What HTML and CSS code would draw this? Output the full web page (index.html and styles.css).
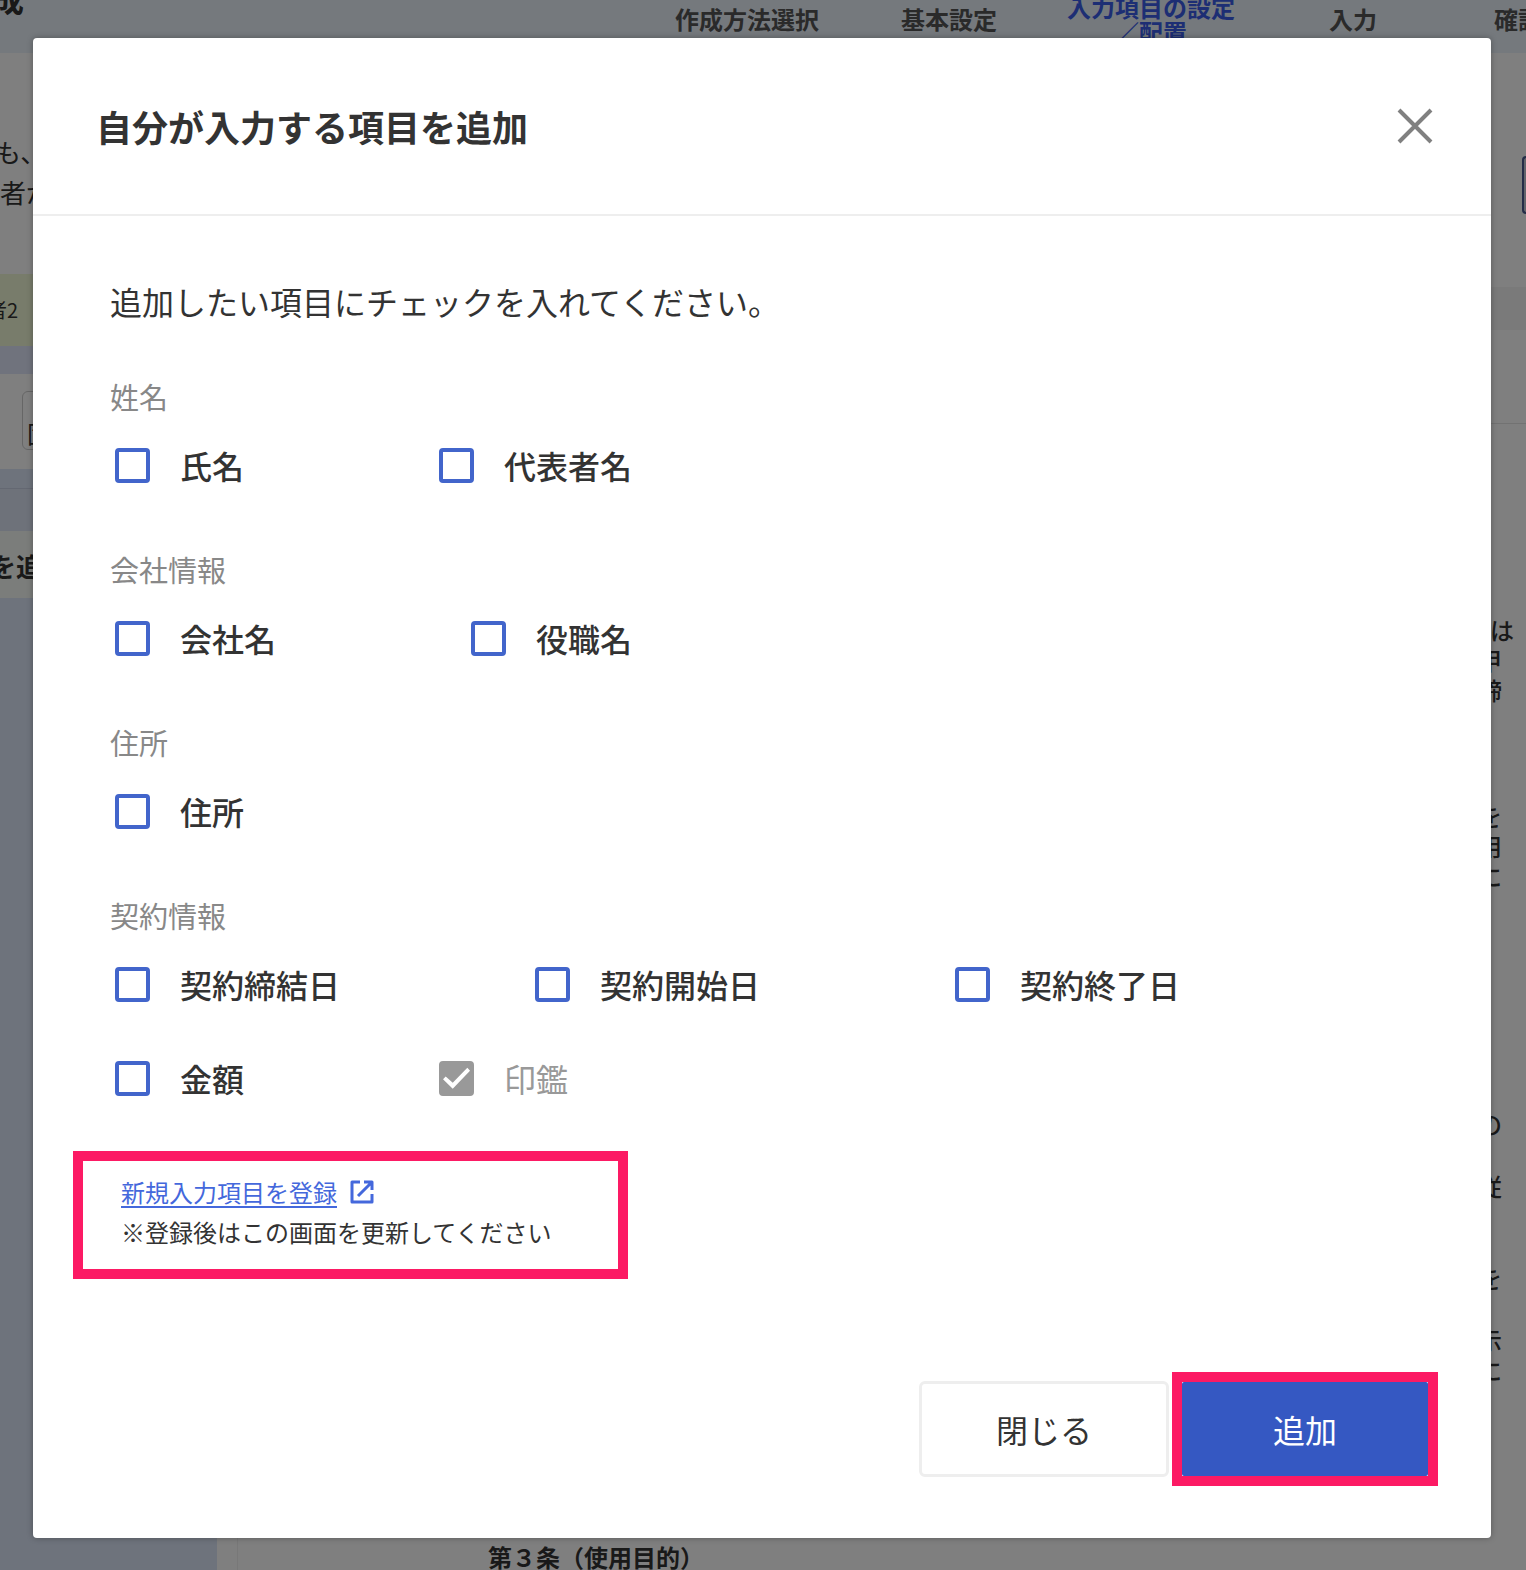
FILE: index.html
```html
<!DOCTYPE html>
<html lang="ja">
<head>
<meta charset="utf-8">
<meta name="viewport" content="width=device-width, initial-scale=1">
<title>自分が入力する項目を追加</title>
<link rel="stylesheet" href="styles.css">
</head>
<body>
<div class="stage">
  <div class="page" aria-hidden="true">
    <header class="page-header">
      <div class="page-title">成</div>
      <ol class="steps">
        <li>作成方法選択</li>
        <li>基本設定</li>
        <li class="current">入力項目の設定<br>／配置</li>
        <li>入力</li>
        <li class="last">確認</li>
      </ol>
    </header>
    <div class="page-columns">
      <aside class="sidebar">
        <div class="lead">も、<br>者が</div>
        <div class="party">者2</div>
        <div class="strip"></div>
        <div class="field-row"><div class="field">固</div></div>
        <div class="tabs"></div>
        <div class="add-row">を追</div>
      </aside>
      <section class="preview">
        <div class="preview-actions"><div class="outlined"></div></div>
        <div class="toolbar"></div>
        <div class="paper">
          <div class="paper-top"></div>
          <div class="clause"><span class="wide">は</span><span>甲</span><span>締</span></div>
          <div class="clause"><span>を</span><span>用</span><span>に</span></div>
          <div class="clause far"><span>の</span></div>
          <div class="clause near"><span>従</span></div>
          <div class="clause mid"><span>を</span></div>
          <div class="clause near"><span>示</span><span>に</span></div>
          <div class="article">第３条（使用目的）</div>
        </div>
      </section>
    </div>
    <div class="scrim"></div>
  </div>

  <main class="dialog" role="dialog" aria-labelledby="dialog-title">
    <header class="dialog-header">
      <h1 id="dialog-title">自分が入力する項目を追加</h1>
      <button class="icon-button" type="button" aria-label="ダイアログを閉じる">
        <svg viewBox="0 0 36 36" width="36" height="36" aria-hidden="true"><path d="M2 2 34 34M34 2 2 34" fill="none" stroke="#808080" stroke-width="4"/></svg>
      </button>
    </header>
    <form class="dialog-form">
      <div class="dialog-body">
        <p class="intro">追加したい項目にチェックを入れてください。</p>
        <fieldset>
          <legend>姓名</legend>
          <div class="options">
            <label><input type="checkbox">氏名</label>
            <label><input type="checkbox">代表者名</label>
          </div>
        </fieldset>
        <fieldset>
          <legend>会社情報</legend>
          <div class="options">
            <label><input type="checkbox">会社名</label>
            <label><input type="checkbox">役職名</label>
          </div>
        </fieldset>
        <fieldset>
          <legend>住所</legend>
          <div class="options">
            <label><input type="checkbox">住所</label>
          </div>
        </fieldset>
        <fieldset>
          <legend>契約情報</legend>
          <div class="options">
            <label><input type="checkbox">契約締結日</label>
            <label><input type="checkbox">契約開始日</label>
            <label><input type="checkbox">契約終了日</label>
          </div>
          <div class="options">
            <label><input type="checkbox">金額</label>
            <label class="disabled"><input type="checkbox" checked disabled>印鑑</label>
          </div>
        </fieldset>
      </div>
      <div class="register">
        <div class="register-line">
          <a href="#register">新規入力項目を登録</a>
          <svg viewBox="0 0 24 24" width="24" height="24" aria-hidden="true"><path d="M10 2H2v20h20v-8M14 2h8v8M22 2 8 16" fill="none" stroke="#4468dc" stroke-width="3" stroke-linejoin="round"/></svg>
        </div>
        <p>※登録後はこの画面を更新してください</p>
      </div>
      <footer class="dialog-footer">
        <button class="button" type="button">閉じる</button>
        <div class="marked"><button class="button primary" type="submit">追加</button></div>
      </footer>
    </form>
  </main>
</div>
</body>
</html>
```
FILE: styles.css
```css
* {
  box-sizing: border-box;
}

body {
  margin: 0;
  color: #333;
  font-family: "Noto Sans CJK JP", "Noto Sans", sans-serif;
  text-spacing-trim: space-all;
}

p,
h1,
ol,
fieldset {
  margin: 0;
  padding: 0;
  border: 0;
  list-style: none;
}

.stage {
  position: relative;
  min-height: 100vh;
  padding: 38px 35px 32px 33px;
}

/* Page behind the dialog */
.page {
  position: absolute;
  inset: 0;
  display: flex;
  flex-direction: column;
  overflow: hidden;
  background: #fff;
}

.scrim {
  position: absolute;
  inset: 0;
  background: rgba(0, 0, 0, 0.5);
}

.page-header {
  display: flex;
  justify-content: space-between;
  flex: none;
  height: 53px;
  padding-bottom: 16px;
  background: #eaf2fa;
}

.page-title {
  margin: -18px 0 0 -8px;
  font-size: 32px;
  font-weight: 700;
  line-height: 32px;
}

.steps {
  display: grid;
  grid-template-columns: repeat(5, 202px);
  align-items: center;
  align-content: center;
  flex: none;
  margin-right: -130px;
  color: #555;
  font-size: 24px;
  font-weight: 700;
  line-height: 25px;
  text-align: center;
}

.steps .current {
  color: #3a5ce8;
}

.steps .last {
  padding-left: 40px;
  text-align: left;
}

.page-columns {
  display: grid;
  grid-template-columns: 217px 1fr;
  flex: 1;
}

.sidebar {
  display: flex;
  flex-direction: column;
  background: #dce6f8;
}

.lead {
  height: 221px;
  padding-top: 79px;
  background: #fff;
  font-size: 26px;
  line-height: 40px;
  text-indent: -5px;
}

.party {
  height: 72px;
  background: #f1f8d6;
  font-size: 20px;
  line-height: 72px;
  text-indent: -13px;
}

.strip {
  height: 28px;
  background: #e0e6fa;
}

.field-row {
  height: 95px;
  padding: 17px 0 0 22px;
  background: #fff;
}

.field {
  height: 59px;
  padding: 24px 4px 0;
  border: 1px solid #ccc;
  border-radius: 6px;
  font-size: 24px;
  line-height: 34px;
}

.tabs {
  height: 62px;
  border-bottom: 42px solid #dce4f4;
  box-shadow: inset 0 -1px #c8d0e4;
}

.add-row {
  height: 67px;
  background: #f6faf6;
  font-size: 26px;
  font-weight: 700;
  line-height: 70px;
  text-indent: -10px;
}

.preview {
  display: flex;
  flex-direction: column;
}

.preview-actions {
  display: flex;
  justify-content: flex-end;
  height: 234px;
  padding-top: 103px;
}

.outlined {
  width: 4px;
  height: 58px;
  border: 2px solid #4a5a90;
  border-right: 0;
  border-radius: 4px 0 0 4px;
  background: #c4c8d8;
}

.toolbar {
  height: 43px;
  background: #f4f4f4;
}

.paper {
  flex: 1;
  margin-left: 20px;
  padding-right: 24px;
  border-left: 1px solid #f0f0f0;
  font-size: 24px;
  font-weight: 500;
  line-height: 30px;
}

.paper-top {
  height: 94px;
  margin-right: -24px;
  border-bottom: 1px solid #e4e4e4;
}

.clause {
  display: grid;
  justify-items: end;
  margin-top: 96px;
}

.clause:nth-child(2) {
  margin-top: 191px;
}

.clause .wide {
  margin-right: -12px;
}

.clause.far {
  margin-top: 218px;
}

.clause.near {
  margin-top: 32px;
}

.clause.mid {
  margin-top: 62px;
}

.article {
  margin: 157px 0 0 250px;
  font-weight: 700;
}

/* Dialog */
.dialog {
  position: relative;
  border-radius: 4px;
  background: #fff;
  box-shadow: 0 0 6px rgba(0, 0, 0, 0.3);
}

.dialog-header {
  display: flex;
  align-items: center;
  justify-content: space-between;
  height: 178px;
  padding: 0 58px 0 63px;
  border-bottom: 2px solid #eee;
}

h1 {
  font-size: 36px;
  font-weight: 700;
  line-height: 48px;
}

.icon-button {
  padding: 0;
  border: 0;
  background: none;
}

.icon-button svg {
  display: block;
}

.dialog-body {
  padding: 61px 77px 49px;
}

.intro {
  margin-bottom: 49px;
  font-size: 32px;
  line-height: 48px;
}

fieldset {
  min-width: 0;
}

fieldset + fieldset {
  margin-top: 58px;
}

legend {
  display: block;
  margin-bottom: 23px;
  padding: 0;
  color: #888;
  font-size: 29px;
  line-height: 44px;
}

.options {
  display: flex;
  flex-wrap: wrap;
  gap: 45px 195px;
  padding-left: 5px;
}

.options + .options {
  margin-top: 46px;
}

label {
  display: flex;
  align-items: center;
  gap: 30px;
  font-size: 32px;
  font-weight: 500;
  line-height: 48px;
}

label.disabled {
  color: #999;
  font-weight: 400;
}

input[type="checkbox"] {
  width: 35px;
  height: 35px;
  margin: 0;
  border: 4px solid #4265cb;
  border-radius: 4px;
  appearance: none;
  background: #fff;
}

input[type="checkbox"]:checked {
  border-color: #999;
  background: #999;
}

input[type="checkbox"]:checked::before {
  content: "";
  display: block;
  height: 27px;
  background: #fff;
  clip-path: polygon(0 55%, 10% 44%, 36% 68%, 90% 12%, 100% 23%, 36% 90%);
}

.register {
  width: 555px;
  max-width: calc(100% - 80px);
  margin-left: 40px;
  padding: 11px 38px 17px;
  border: 10px solid #fc1a64;
  font-size: 24px;
  line-height: 40px;
}

.register-line {
  display: flex;
  align-items: center;
  gap: 13px;
}

.register a {
  color: #4468dc;
  text-underline-offset: 4px;
}

.dialog-footer {
  display: flex;
  align-items: center;
  justify-content: flex-end;
  gap: 3px;
  padding: 93px 53px 52px;
}

.button {
  width: 250px;
  height: 96px;
  border: 3px solid #eee;
  border-radius: 6px;
  background: #fff;
  color: #333;
  font: inherit;
  font-size: 32px;
}

.marked {
  display: flex;
  border: 10px solid #fc1a64;
}

.button.primary {
  width: 246px;
  height: 94px;
  border: 0;
  border-radius: 2px;
  background: #3558c2;
  color: #fff;
}
```
